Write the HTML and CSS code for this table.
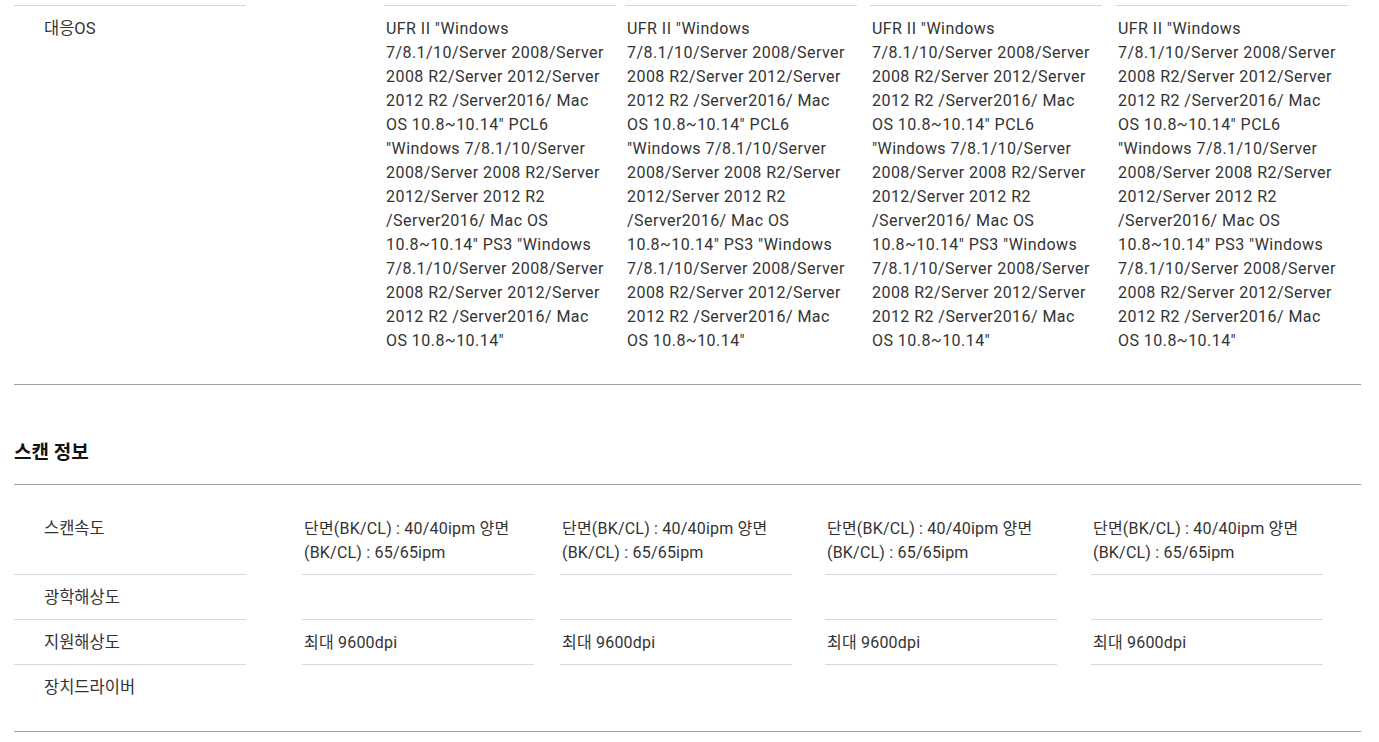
FILE: index.html
```html
<!DOCTYPE html>
<html lang="ko">
<head>
<meta charset="utf-8">
<title>제품 사양</title>
<link rel="stylesheet" href="styles.css">
</head>
<body>
<div class="page">
  <section class="spec spec-os">
    <div class="spec-grid grid-os">
      <div class="cell label"><div class="box top">대응OS</div></div>
      <div class="cell"><div class="box top val os">UFR II "Windows 7/8.1/10/Server 2008/Server 2008 R2/Server 2012/Server 2012 R2 /Server2016/ Mac OS 10.8~10.14" PCL6 "Windows 7/8.1/10/Server 2008/Server 2008 R2/Server 2012/Server 2012 R2 /Server2016/ Mac OS 10.8~10.14" PS3 "Windows 7/8.1/10/Server 2008/Server 2008 R2/Server 2012/Server 2012 R2 /Server2016/ Mac OS 10.8~10.14"</div></div>
      <div class="cell"><div class="box top val os">UFR II "Windows 7/8.1/10/Server 2008/Server 2008 R2/Server 2012/Server 2012 R2 /Server2016/ Mac OS 10.8~10.14" PCL6 "Windows 7/8.1/10/Server 2008/Server 2008 R2/Server 2012/Server 2012 R2 /Server2016/ Mac OS 10.8~10.14" PS3 "Windows 7/8.1/10/Server 2008/Server 2008 R2/Server 2012/Server 2012 R2 /Server2016/ Mac OS 10.8~10.14"</div></div>
      <div class="cell"><div class="box top val os">UFR II "Windows 7/8.1/10/Server 2008/Server 2008 R2/Server 2012/Server 2012 R2 /Server2016/ Mac OS 10.8~10.14" PCL6 "Windows 7/8.1/10/Server 2008/Server 2008 R2/Server 2012/Server 2012 R2 /Server2016/ Mac OS 10.8~10.14" PS3 "Windows 7/8.1/10/Server 2008/Server 2008 R2/Server 2012/Server 2012 R2 /Server2016/ Mac OS 10.8~10.14"</div></div>
      <div class="cell"><div class="box top val os">UFR II "Windows 7/8.1/10/Server 2008/Server 2008 R2/Server 2012/Server 2012 R2 /Server2016/ Mac OS 10.8~10.14" PCL6 "Windows 7/8.1/10/Server 2008/Server 2008 R2/Server 2012/Server 2012 R2 /Server2016/ Mac OS 10.8~10.14" PS3 "Windows 7/8.1/10/Server 2008/Server 2008 R2/Server 2012/Server 2012 R2 /Server2016/ Mac OS 10.8~10.14"</div></div>
    </div>
  </section>

  <h2 class="spec-title">스캔 정보</h2>
  <section class="spec spec-scan">
    <div class="spec-grid grid-scan">
      <div class="cell label"><div class="box line">스캔속도</div></div>
      <div class="cell"><div class="box line val">단면(BK/CL) : 40/40ipm 양면 (BK/CL) : 65/65ipm</div></div>
      <div class="cell"><div class="box line val">단면(BK/CL) : 40/40ipm 양면 (BK/CL) : 65/65ipm</div></div>
      <div class="cell"><div class="box line val">단면(BK/CL) : 40/40ipm 양면 (BK/CL) : 65/65ipm</div></div>
      <div class="cell"><div class="box line val">단면(BK/CL) : 40/40ipm 양면 (BK/CL) : 65/65ipm</div></div>

      <div class="cell label"><div class="box line">광학해상도</div></div>
      <div class="cell"><div class="box line val"></div></div>
      <div class="cell"><div class="box line val"></div></div>
      <div class="cell"><div class="box line val"></div></div>
      <div class="cell"><div class="box line val"></div></div>

      <div class="cell label"><div class="box line">지원해상도</div></div>
      <div class="cell"><div class="box line val">최대 9600dpi</div></div>
      <div class="cell"><div class="box line val">최대 9600dpi</div></div>
      <div class="cell"><div class="box line val">최대 9600dpi</div></div>
      <div class="cell"><div class="box line val">최대 9600dpi</div></div>

      <div class="cell label"><div class="box">장치드라이버</div></div>
      <div class="cell"><div class="box val"></div></div>
      <div class="cell"><div class="box val"></div></div>
      <div class="cell"><div class="box val"></div></div>
      <div class="cell"><div class="box val"></div></div>
    </div>
  </section>
</div>
</body>
</html>
```

FILE: styles.css
```css
html, body {
  margin: 0;
  padding: 0;
  background: #ffffff;
}

body {
  font-family: Roboto, "Noto Sans CJK KR", sans-serif;
  font-size: 16px;
  line-height: 24px;
  color: #333333;
}

.page {
  padding: 5px 18px 0 14px;
}

.spec {
  border-bottom: 1px solid #a0a0a0;
  padding-bottom: 22px;
}

.spec-scan {
  border-top: 1px solid #a0a0a0;
  padding-top: 21px;
}

.spec-grid {
  display: grid;
}

.grid-os {
  grid-template-columns: 370px 241px 245px 246px 1fr;
}

.grid-scan {
  grid-template-columns: 288px 258px 265px 266px 1fr;
}

.cell {
  display: flex;
}

.box {
  width: 232px;
  box-sizing: border-box;
  min-height: 44px;
  padding: 11px 4px 9px 2px;
}

.val {
  letter-spacing: 0.2px;
}

.val.os {
  letter-spacing: 0.45px;
}

.box.top {
  border-top: 1px solid #d5d8df;
}

.box.line {
  border-bottom: 1px solid #d5d8df;
}

.label .box {
  padding-left: 30px;
  font-size: 16.5px;
}

.spec-title {
  margin: 0;
  padding: 55px 0 18px;
  font-size: 19px;
  line-height: 26px;
  font-weight: 700;
  color: #111111;
}
```
